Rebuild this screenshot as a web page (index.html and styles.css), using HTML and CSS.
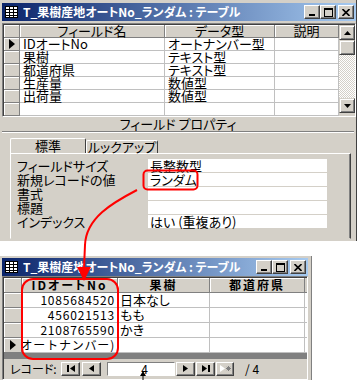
FILE: index.html
```html
<!DOCTYPE html>
<html lang="ja">
<head>
    <meta charset="UTF-8">
    <title>T_果樹産地オートNo_ランダム</title>
    <link rel="stylesheet" href="styles.css">
</head>
<body>
    <!-- design view window -->
    <div class="win win-design">
        <div class="titlebar">
            <svg class="tb-icon" width="13" height="12" viewBox="0 0 13 12"><rect x=".5" y=".5" width="12" height="11" fill="#fff" stroke="#000"/><path d="M1 3.5h11M1 6.5h11M1 9.5h11M4.5 1v10M8.5 1v10" stroke="#000"/></svg>
            <span class="title">T_果樹産地オートNo_ランダム : テーブル</span>
            <div class="ctrls">
                <span class="cbtn"><svg width="8" height="8" viewBox="0 0 8 8"><rect x="1" y="6" width="6" height="2"/></svg></span>
                <span class="cbtn"><svg width="9" height="9" viewBox="0 0 9 9"><rect x=".5" y=".5" width="8" height="8" fill="none" stroke="#000"/><rect width="9" height="2"/></svg></span>
                <span class="cbtn close"><svg width="8" height="7" viewBox="0 0 8 7"><path d="M0.5 0L7.5 7M7.5 0L0.5 7" stroke="#000" stroke-width="1.6"/></svg></span>
            </div>
        </div>

        <div class="design">
            <div class="fields">
                <div class="sel"></div><div class="hd">フィールド名</div><div class="hd">データ型</div><div class="hd">説明</div>
                <div class="sel cur"></div><div class="c">IDオートNo</div><div class="c">オートナンバー型</div><div class="c"></div>
                <div class="sel"></div><div class="c">果樹</div><div class="c">テキスト型</div><div class="c"></div>
                <div class="sel"></div><div class="c">都道府県</div><div class="c">テキスト型</div><div class="c"></div>
                <div class="sel"></div><div class="c">生産量</div><div class="c">数値型</div><div class="c"></div>
                <div class="sel"></div><div class="c">出荷量</div><div class="c">数値型</div><div class="c"></div>
                <div class="sel"></div><div class="c"></div><div class="c"></div><div class="c"></div>
            </div>
            <div class="vscroll">
                <span class="sbtn"><svg width="7" height="4" viewBox="0 0 7 4"><path d="M3.5 0L7 4H0z"/></svg></span>
                <span class="thumb"></span>
                <span class="track"></span>
                <span class="sbtn"><svg width="7" height="4" viewBox="0 0 7 4"><path d="M0 0h7L3.5 4z"/></svg></span>
            </div>
        </div>

        <div class="props-head">フィールド プロパティ</div>

        <div class="tabs">
            <div class="tab on">標準</div>
            <div class="tab off">ルックアップ</div>
        </div>
        <div class="panel">
            <div class="props">
                <div class="pl">フィールドサイズ</div><div class="pv">長整数型</div>
                <div class="pl">新規レコードの値</div><div class="pv">ランダム</div>
                <div class="pl">書式</div><div class="pv"></div>
                <div class="pl">標題</div><div class="pv"></div>
                <div class="pl">インデックス</div><div class="pv">はい (重複あり)</div>
            </div>
        </div>
    </div>

    <!-- datasheet window -->
    <div class="win win-sheet">
        <div class="titlebar">
            <svg class="tb-icon" width="13" height="12" viewBox="0 0 13 12"><rect x=".5" y=".5" width="12" height="11" fill="#fff" stroke="#000"/><path d="M1 3.5h11M1 6.5h11M1 9.5h11M4.5 1v10M8.5 1v10" stroke="#000"/></svg>
            <span class="title">T_果樹産地オートNo_ランダム : テーブル</span>
            <div class="ctrls">
                <span class="cbtn"><svg width="8" height="8" viewBox="0 0 8 8"><rect x="1" y="6" width="6" height="2"/></svg></span>
                <span class="cbtn"><svg width="9" height="9" viewBox="0 0 9 9"><rect x=".5" y=".5" width="8" height="8" fill="none" stroke="#000"/><rect width="9" height="2"/></svg></span>
                <span class="cbtn close"><svg width="8" height="7" viewBox="0 0 8 7"><path d="M0.5 0L7.5 7M7.5 0L0.5 7" stroke="#000" stroke-width="1.6"/></svg></span>
            </div>
        </div>

        <div class="sheet">
            <div class="rows">
                <div class="sel"></div><div class="hd">IDオートNo</div><div class="hd">果樹</div><div class="hd">都道府県</div><div class="hd edge"></div>
                <div class="sel"></div><div class="c num"><span>1085684520</span></div><div class="c">日本なし</div><div class="c"></div><div class="c edge"></div>
                <div class="sel"></div><div class="c num"><span>456021513</span></div><div class="c">もも</div><div class="c"></div><div class="c edge"></div>
                <div class="sel"></div><div class="c num"><span>2108765590</span></div><div class="c">かき</div><div class="c"></div><div class="c edge"></div>
                <div class="sel cur"></div><div class="c num clip"><span>(オートナンバー)</span></div><div class="c"></div><div class="c"></div><div class="c edge"></div>
            </div>
            <div class="empty"></div>
            <div class="navbar">
                <span class="nav-label">レコード:</span>
                <span class="nbtn first"><svg width="8" height="7" viewBox="0 0 8 7"><rect width="2" height="7"/><path d="M8 0v7L3 3.5z"/></svg></span>
                <span class="nbtn"><svg width="5" height="7" viewBox="0 0 5 7"><path d="M5 0v7L0 3.5z"/></svg></span>
                <span class="recno">4</span>
                <span class="nbtn"><svg width="5" height="7" viewBox="0 0 5 7"><path d="M0 0v7L5 3.5z"/></svg></span>
                <span class="nbtn"><svg width="8" height="7" viewBox="0 0 8 7"><path d="M0 0v7L5 3.5z"/><rect x="6" width="2" height="7"/></svg></span>
                <span class="nbtn off"><svg width="11" height="7" viewBox="0 0 11 7"><path d="M0 0v7L5 3.5z" fill="#fff"/><path d="M8.5 1v5M6 3.5h5M6.8 1.8l3.4 3.4M10.2 1.8l-3.4 3.4" stroke="#808080"/></svg></span>
                <span class="nav-total">/ 4</span>
            </div>
        </div>
    </div>

    <!-- red annotations -->
    <svg class="annot" width="360" height="380" viewBox="0 0 360 380">
        <rect x="143.5" y="170.5" width="54" height="19" rx="4" fill="none" stroke="#f00" stroke-width="2"/>
        <path d="M137 190 C 112 203 86 218 85 245 L 84 268" fill="none" stroke="#f00" stroke-width="2"/>
        <polygon points="77,267 91,267 84,281" fill="#f00"/>
        <rect x="22" y="279" width="96" height="80" rx="11" fill="none" stroke="#f00" stroke-width="2"/>
        <line x1="143" y1="380" x2="143" y2="375" stroke="#000"/>
        <polygon points="140,376 146,376 143,371" fill="#000"/>
    </svg>
</body>
</html>
```

FILE: styles.css
```css
* {
    margin: 0;
    padding: 0;
    box-sizing: border-box;
}

body {
    font-family: "Noto Sans CJK JP", sans-serif;
    font-size: 12px;
    font-feature-settings: "palt";
    color: #000;
    background: #fff;
    width: 360px;
    height: 380px;
    overflow: hidden;
    position: relative;
}

.win {
    background: #d4d0c8;
}

.win-design {
    width: 357px;
    height: 241px;
    padding: 3px 0 0 2px;
    border-right: 1px solid #404040;
}

.win-sheet {
    width: 312px;
    height: 124px;
    margin-top: 15px;
    padding: 2px 3px 0 2px;
    border-right: 1px solid #808080;
}

/* title bar */
.titlebar {
    height: 18px;
    display: flex;
    align-items: center;
    padding: 0 2px 0 3px;
    background: linear-gradient(to right, #0a246a, #a6caf0);
    color: #fff;
    font-weight: bold;
}

.tb-icon {
    flex: none;
    margin-right: 5px;
}

.title {
    flex: 1;
    white-space: nowrap;
    overflow: hidden;
    line-height: 18px;
}

.ctrls {
    display: flex;
}

.cbtn {
    width: 16px;
    height: 14px;
    background: #d4d0c8;
    border: 1px solid;
    border-color: #fff #404040 #404040 #fff;
    box-shadow: inset -1px -1px #808080;
    display: flex;
    align-items: center;
    justify-content: center;
}

.cbtn.close {
    margin-left: 2px;
}

/* field grid */
.design {
    display: flex;
    margin-top: 2px;
    height: 94px;
    border: 1px solid;
    border-color: #808080 #fff #fff #808080;
    padding: 1px 0 0 1px;
    box-shadow: inset 1px 1px #404040;
}

.fields {
    flex: 1;
    display: grid;
    grid-template-columns: 16px 145px 110px 1fr;
    grid-template-rows: repeat(7, 13px);
    background: #fff;
    font-size: 13px;
}

.hd,
.sel {
    background: #d4d0c8;
    border-right: 1px solid #808080;
    border-bottom: 1px solid #808080;
    box-shadow: inset 1px 1px #fff;
    text-align: center;
    line-height: 12px;
    white-space: nowrap;
}

.sel.cur {
    display: flex;
    align-items: center;
    justify-content: center;
}

.sel.cur::after {
    content: "";
    border-left: 6px solid #000;
    border-top: 5px solid transparent;
    border-bottom: 5px solid transparent;
}

.c {
    border-right: 1px solid #c0c0c0;
    border-bottom: 1px solid #c0c0c0;
    padding-left: 3px;
    line-height: 12px;
    white-space: nowrap;
    background: #fff;
}

.vscroll {
    width: 16px;
    display: flex;
    flex-direction: column;
}

.sbtn,
.thumb {
    height: 15px;
    background: #d4d0c8;
    border: 1px solid;
    border-color: #d4d0c8 #404040 #404040 #d4d0c8;
    box-shadow: inset 1px 1px #fff, inset -1px -1px #808080;
    display: flex;
    align-items: center;
    justify-content: center;
}

.track {
    flex: 1;
    background: repeating-conic-gradient(#fff 0 25%, #d4d0c8 0 50%) 0 0 / 2px 2px;
}

.vscroll .sbtn:last-child {
    margin-bottom: 3px;
}

/* property sheet */
.props-head {
    text-align: center;
    line-height: 14px;
    height: 15px;
    font-size: 13px;
    border-bottom: 1px solid #808080;
    box-shadow: 0 1px #fff;
    margin-right: 2px;
}

.tabs {
    display: flex;
    align-items: flex-end;
    margin: 6px 0 0 8px;
    height: 15px;
    font-size: 13px;
}

.tab {
    text-align: center;
    border: 1px solid;
    border-bottom: none;
    border-color: #fff #404040 transparent #fff;
    border-radius: 2px 2px 0 0;
    white-space: nowrap;
}

.tab.on {
    width: 76px;
    height: 15px;
    line-height: 13px;
}

.tab.off {
    width: 72px;
    height: 13px;
    line-height: 11px;
}

.panel {
    margin-left: 8px;
    width: 341px;
    height: 86px;
    border: 1px solid;
    border-color: #fff #404040 transparent #fff;
    box-shadow: inset -1px 0 #808080;
    padding: 5px 0 0 6px;
    font-size: 13px;
}

.props {
    display: grid;
    grid-template-columns: 131px 179px;
    grid-auto-rows: 13px;
    row-gap: 1px;
}

.pl,
.pv {
    line-height: 13px;
    white-space: nowrap;
}

.pv {
    background: #fff;
    padding-left: 2px;
}

/* datasheet */
.sheet {
    border: 1px solid;
    border-color: #808080 #fff #fff #808080;
    padding: 1px 0 0 1px;
    box-shadow: inset 1px 1px #404040;
    height: 104px;
}

.rows {
    display: grid;
    grid-template-columns: 18px 96px 92px 95px 1fr;
    grid-template-rows: repeat(5, 15px);
    background: #fff;
}

.rows .hd {
    font-weight: bold;
    letter-spacing: 2px;
    line-height: 14px;
}

.rows .hd.edge {
    box-shadow: none;
    border-right: none;
}

.rows .sel {
    line-height: 14px;
}

.rows .c {
    line-height: 14px;
    font-size: 13px;
    padding-left: 2px;
}

.rows .c.num {
    display: flex;
    justify-content: flex-end;
    padding: 0 2px 0 0;
    font-size: 12px;
    letter-spacing: 0.8px;
}

.rows .c.clip {
    overflow: hidden;
    font-feature-settings: normal;
}

.rows .c.edge {
    border-right: none;
}

.empty {
    height: 6px;
    background: #808080;
}

.navbar {
    height: 19px;
    display: flex;
    align-items: center;
    padding-left: 6px;
    font-size: 12px;
}

.nav-label {
    width: 51px;
    white-space: nowrap;
}

.nbtn {
    width: 19px;
    height: 14px;
    background: #d4d0c8;
    border: 1px solid;
    border-color: #fff #404040 #404040 #fff;
    box-shadow: inset -1px -1px #808080;
    display: flex;
    align-items: center;
    justify-content: center;
    margin-right: 1px;
}

.nbtn.first {
    margin-right: 2px;
}

.recno {
    width: 68px;
    height: 14px;
    margin: 0 1px 0 5px;
    background: #fff;
    border: 1px solid;
    border-color: #808080 #fff #fff #808080;
    text-align: right;
    padding-right: 26px;
    line-height: 12px;
}

.nbtn.off {
    width: 18px;
}

.nav-total {
    margin-left: 10px;
    white-space: nowrap;
}

/* annotation overlay */
.annot {
    position: absolute;
    left: 0;
    top: 0;
    pointer-events: none;
}
```
